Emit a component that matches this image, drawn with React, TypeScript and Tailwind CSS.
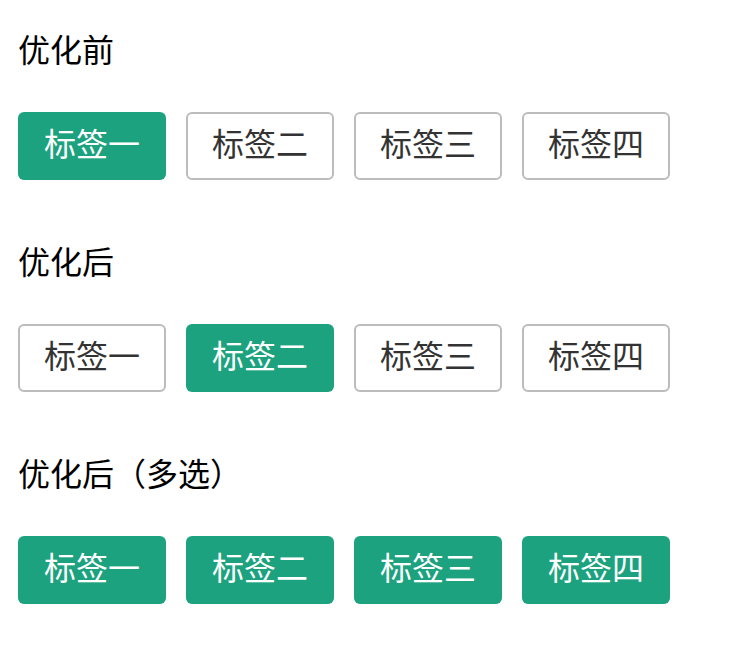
import React from "react";

const tags = ["标签一", "标签二", "标签三", "标签四"];

const sections = [
	{ title: "优化前", active: [0] },
	{ title: "优化后", active: [1] },
	{ title: "优化后（多选）", active: [0, 1, 2, 3] },
];

const App = () => {
	return (
		<div
			className="w-[730px] h-[668px] bg-white pl-[18px] pt-[24px]"
			style={{ fontFamily: '"Noto Sans CJK SC", "Noto Sans", sans-serif' }}
		>
			{sections.map((section) => (
				<div key={section.title} className="mb-[56px]">
					<h2 className="text-[32px] leading-[48px] text-black">{section.title}</h2>
					<div className="flex gap-5 mt-[40px]">
						{tags.map((tag, i) => {
							const on = section.active.includes(i);
							return (
								<button
									key={tag}
									className={`w-[148px] h-[68px] rounded-[6px] text-[32px] leading-none pb-2 flex items-center justify-center ${
										on
											? "bg-[#1ca27e] text-white"
											: "bg-white text-[#333] border-2 border-[#bcbcbc]"
									}`}
								>
									{tag}
								</button>
							);
						})}
					</div>
				</div>
			))}
		</div>
	);
};

export default App;
